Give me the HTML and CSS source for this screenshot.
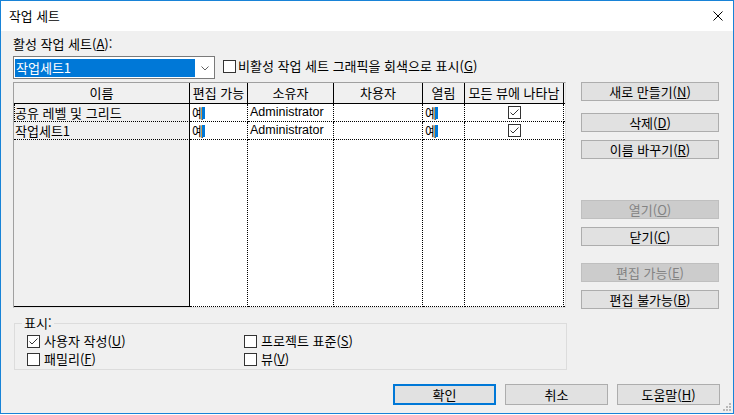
FILE: index.html
```html
<!DOCTYPE html>
<html lang="ko">
<head>
<meta charset="utf-8">
<title>작업 세트</title>
<link rel="stylesheet" href="styles.css">
</head>
<body>
<div class="window">
  <div class="titlebar">
    <span class="title">작업 세트</span>
    <svg class="close" width="10" height="10" viewBox="0 0 10 10"><path d="M0.5 0.5 L9.5 9.5 M9.5 0.5 L0.5 9.5" stroke="#000" stroke-width="1" fill="none"/></svg>
  </div>
  <div class="content">
    <div class="label">활성 작업 세트(<u>A</u>):</div>
    <div class="combo-row">
      <div class="combo">
        <span class="combo-sel">작업세트1</span>
        <svg class="chev" width="8" height="5" viewBox="0 0 8 5"><path d="M0.5 0.5 L4 4 L7.5 0.5" stroke="#606060" stroke-width="1" fill="none"/></svg>
      </div>
      <div class="opt top-opt"><span class="cb"></span><span>비활성 작업 세트 그래픽을 회색으로 표시(<u>G</u>)</span></div>
    </div>
    <div class="middle">
      <div class="grid">
        <div class="h">이름</div>
        <div class="h">편집 가능</div>
        <div class="h">소유자</div>
        <div class="h">차용자</div>
        <div class="h">열림</div>
        <div class="h">모든 뷰에 나타남</div>
        <div class="h hf"></div>

        <div class="c n focus">공유 레벨 및 그리드</div>
        <div class="c">예<span class="sel"></span></div>
        <div class="c lat">Administrator</div>
        <div class="c"></div>
        <div class="c">예<span class="sel"></span></div>
        <div class="c ck"><span class="cb on"><svg width="11" height="11" viewBox="0 0 11 11"><path d="M1.5 5.5 L4 8 L9.5 2.5" stroke="#333" stroke-width="1" fill="none"/></svg></span></div>
        <div class="c e"></div>

        <div class="c n">작업세트1</div>
        <div class="c">예<span class="sel"></span></div>
        <div class="c lat">Administrator</div>
        <div class="c"></div>
        <div class="c">예<span class="sel"></span></div>
        <div class="c ck"><span class="cb on"><svg width="11" height="11" viewBox="0 0 11 11"><path d="M1.5 5.5 L4 8 L9.5 2.5" stroke="#333" stroke-width="1" fill="none"/></svg></span></div>
        <div class="c e"></div>

        <div class="c n f"></div>
        <div class="c"></div>
        <div class="c"></div>
        <div class="c"></div>
        <div class="c"></div>
        <div class="c"></div>
        <div class="c e"></div>
      </div>
      <div class="side">
        <div class="btn b-new">새로 만들기(<u>N</u>)</div>
        <div class="btn b-del">삭제(<u>D</u>)</div>
        <div class="btn b-ren">이름 바꾸기(<u>R</u>)</div>
        <div class="btn dis b-open">열기(<u>O</u>)</div>
        <div class="btn b-close">닫기(<u>C</u>)</div>
        <div class="btn dis b-edit">편집 가능(<u>E</u>)</div>
        <div class="btn b-noedit">편집 불가능(<u>B</u>)</div>
      </div>
    </div>
    <fieldset class="group">
      <legend>표시:</legend>
      <div class="opts">
        <div class="opt"><span class="cb on"><svg width="11" height="11" viewBox="0 0 11 11"><path d="M1.5 5.5 L4 8 L9.5 2.5" stroke="#333" stroke-width="1" fill="none"/></svg></span><span>사용자 작성(<u>U</u>)</span></div>
        <div class="opt"><span class="cb"></span><span>프로젝트 표준(<u>S</u>)</span></div>
        <div class="opt"><span class="cb"></span><span>패밀리(<u>F</u>)</span></div>
        <div class="opt"><span class="cb"></span><span>뷰(<u>V</u>)</span></div>
      </div>
    </fieldset>
    <div class="footer">
      <div class="btn big def">확인</div>
      <div class="btn big">취소</div>
      <div class="btn big">도움말(<u>H</u>)</div>
    </div>
  </div>
  <svg class="grip" width="10" height="10" viewBox="0 0 10 10">
    <rect x="8" y="2" width="2" height="2" fill="#b8b8b8"/>
    <rect x="5" y="5" width="2" height="2" fill="#b8b8b8"/>
    <rect x="8" y="5" width="2" height="2" fill="#b8b8b8"/>
    <rect x="2" y="8" width="2" height="2" fill="#b8b8b8"/>
    <rect x="5" y="8" width="2" height="2" fill="#b8b8b8"/>
    <rect x="8" y="8" width="2" height="2" fill="#b8b8b8"/>
  </svg>
</div>
</body>
</html>
```

FILE: styles.css
```css
* { box-sizing: border-box; }
html, body { margin: 0; padding: 0; }
body {
  width: 734px;
  height: 415px;
  overflow: hidden;
  background: #ffffff;
  font-family: "Noto Sans CJK KR", "Noto Sans", sans-serif;
  font-size: 13px;
  color: #000;
}
u { text-decoration: underline; text-underline-offset: 1px; }

.window {
  position: relative;
  width: 734px;
  height: 414px;
  border: 1px solid #1883d7;
  background: #f0f0f0;
  display: flex;
  flex-direction: column;
}
.titlebar {
  flex: none;
  height: 30px;
  background: #fff;
  display: flex;
  align-items: center;
  justify-content: space-between;
  padding: 0 10px 0 8px;
}
.title { line-height: 16px; font-size: 12.8px; }
.close { display: block; }

.content {
  padding: 0 13px 0 12px;
  display: flex;
  flex-direction: column;
}
.label { margin-top: 5px; line-height: 16px; }

.combo-row { margin-top: 4px; display: flex; align-items: flex-start; }
.combo {
  width: 202px;
  height: 23px;
  border: 1px solid #7a7a7a;
  background: #fff;
  padding: 2px 1px;
  display: flex;
  align-items: center;
}
.combo-sel {
  width: 180px;
  height: 18px;
  background: #0078d7;
  color: #fff;
  line-height: 17px;
  padding-left: 1px;
}
.chev { margin-left: 6px; margin-top: 1px; }

.opt { display: flex; align-items: center; gap: 4px; line-height: 16px; }
.top-opt { margin-left: 8px; margin-top: 2px; gap: 2px; }

.cb {
  width: 13px;
  height: 13px;
  border: 1px solid #333;
  background: #fff;
  display: inline-flex;
  flex: none;
}
.cb svg { display: block; }

.middle { margin-top: 3px; display: flex; gap: 15px; align-items: flex-start; }

.grid {
  width: 553px;
  height: 226px;
  border: 1px solid #a0a0a0;
  border-right-color: #e3e3e3;
  border-bottom-color: #e3e3e3;
  background: #fff;
  display: grid;
  grid-template-columns: 176px 58px 86px 89px 42px 99px 1px;
  grid-template-rows: 21px 18px 18px 167px;
}
.h {
  background: #f0f0f0;
  border-right: 1px solid #000;
  border-bottom: 1px solid #000;
  text-align: center;
  line-height: 19px;
  white-space: nowrap;
}
.h.hf { border-right: 0; }
.c {
  border-right: 1px dotted #000;
  border-bottom: 1px dotted #000;
  line-height: 17px;
  padding-left: 2px;
  white-space: nowrap;
}
.c.lat { font-family: "Liberation Sans", "Noto Sans", sans-serif; font-size: 12.5px; padding-left: 2px; }
.c.e { border-right: 0; padding: 0; }
.c.n {
  background: #f0f0f0;
  border-right: 1px solid #000;
  padding-left: 1px;
}
.c.n.focus { border-left: 1px dotted #000; padding-left: 0; }
.c.n.f { border-bottom: 1px solid #000; }
.sel {
  display: inline-block;
  width: 3px;
  height: 12px;
  background: #0078d7;
  vertical-align: -1px;
  margin-left: -2px;
}
.c.ck { display: flex; justify-content: center; align-items: center; padding-left: 0; }
.c.ck .cb { margin-left: 1px; }

.side { width: 138px; display: flex; flex-direction: column; }
.btn {
  height: 19px;
  background: #e1e1e1;
  border: 1px solid #adadad;
  text-align: center;
  line-height: 17px;
  white-space: nowrap;
}
.btn.dis { background: #cccccc; border-color: #bfbfbf; color: #838383; }
.b-del { margin-top: 12px; }
.b-ren { margin-top: 8px; }
.b-open { margin-top: 41px; }
.b-close { margin-top: 8px; }
.b-edit { margin-top: 17px; }
.b-noedit { margin-top: 8px; }

.group {
  margin: 7px 0 0 1px;
  width: 553px;
  border: 1px solid #dcdcdc;
  padding: 2px 0 1px 12px;
  min-width: 0;
}
.group legend {
  margin-left: -5px;
  padding: 0 2px;
  line-height: 14px;
}
.opts {
  display: grid;
  grid-template-columns: 217px auto;
  grid-auto-rows: 18px;
}

.footer {
  margin-top: 14px;
  display: flex;
  justify-content: flex-end;
  gap: 9px;
}
.btn.big { width: 103px; height: 21px; line-height: 19px; }
.btn.def { border: 2px solid #0078d7; line-height: 17px; }

.grip { position: absolute; right: 2px; bottom: 2px; }
```
